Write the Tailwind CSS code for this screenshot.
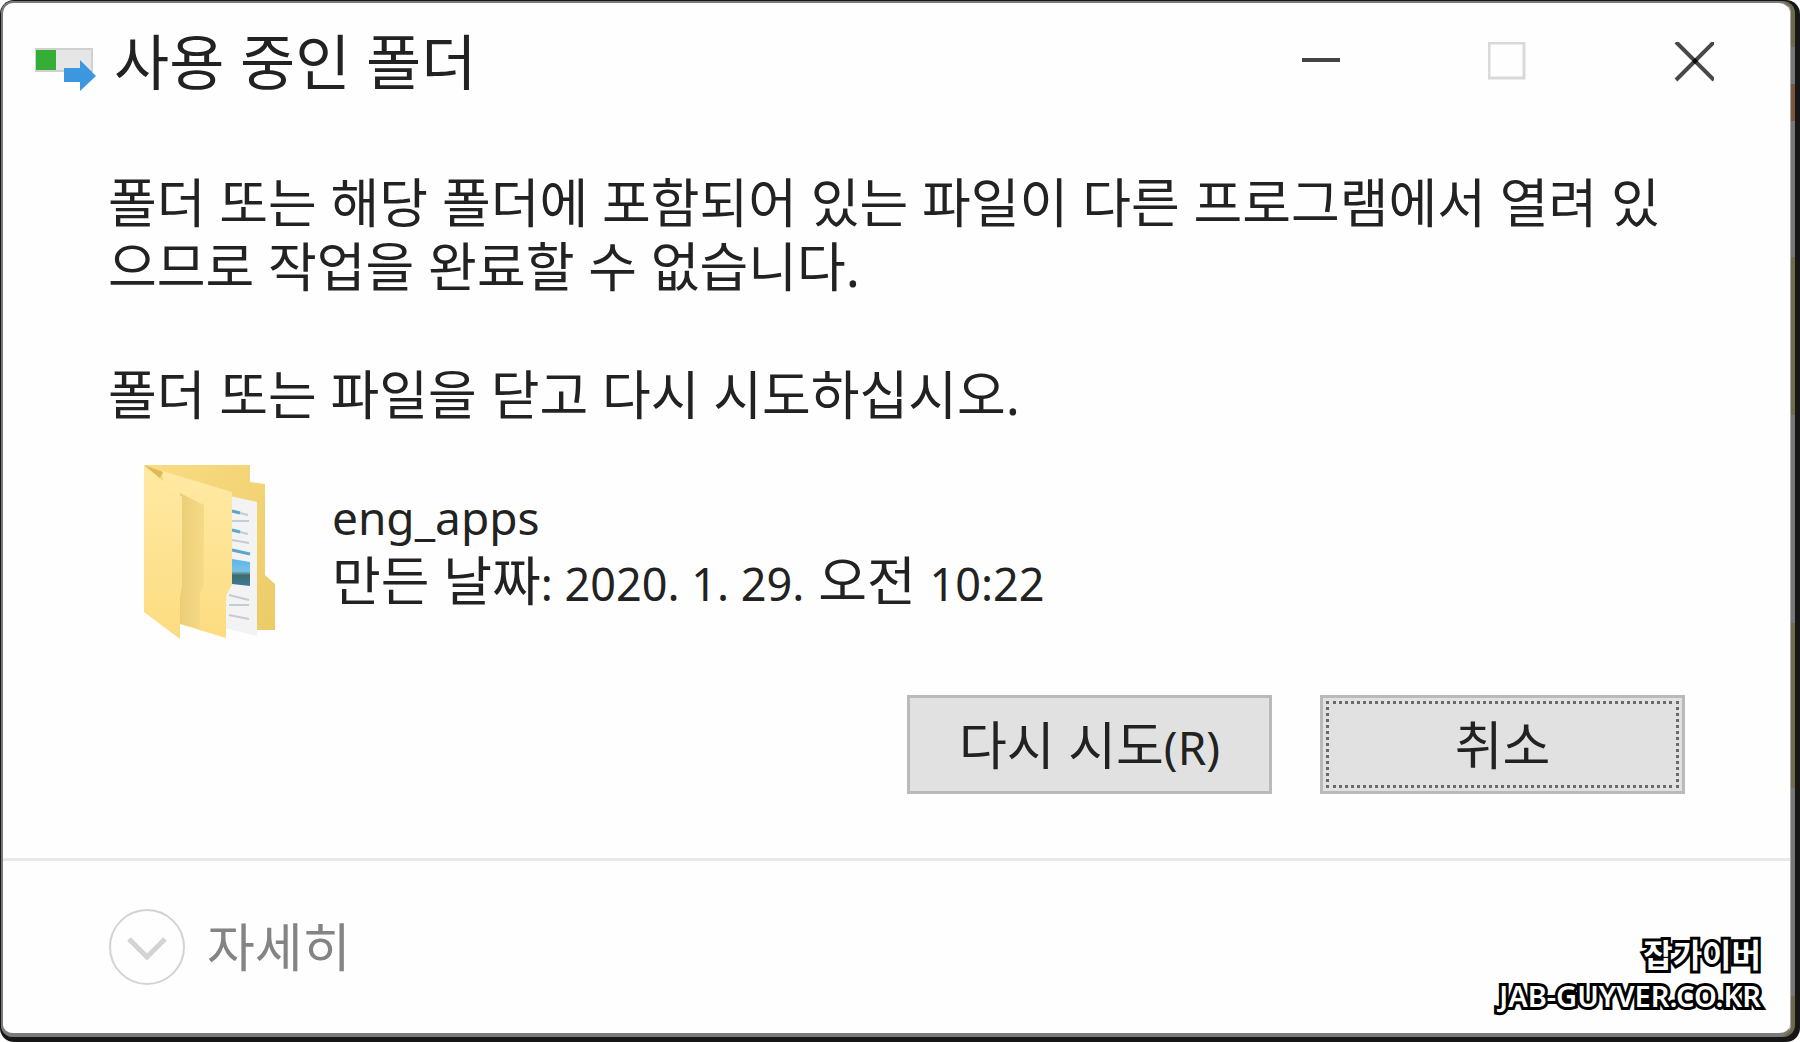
<!DOCTYPE html>
<html lang="ko">
<head>
<meta charset="utf-8">
<title>사용 중인 폴더</title>
<script src="https://cdn.jsdelivr.net/npm/@tailwindcss/browser@4"></script>
</head>
<body class="bg-white font-['Noto_Sans','Noto_Sans_CJK_KR',sans-serif] text-[#222]">
<div class="flex min-h-screen flex-col rounded-[14px] bg-[#161616] pt-px pr-[5px] pb-[5px] pl-px">
  <div class="flex grow flex-col rounded-xl bg-[linear-gradient(to_bottom,#6f694c_4.4%,#777_4.4%_8%,#79583f_8%_11.6%,#777_11.6%_24.7%,#736c4c_24.7%_40%,#777_40%_60%,#736c4c_60%_76%,#777_76%_96%,#6f694c_96%)] pr-1">
  <main class="relative flex grow flex-col rounded-xl border-t-2 border-r border-b-4 border-l-2 border-[#7a7a7a] border-r-[#aaa] bg-[#fefefe]">
    <header class="flex h-[117px] items-center pr-[56px] pl-[31px]">
      <svg class="mt-4 mr-4 h-[46px] w-[64px] shrink-0" viewBox="0 0 64 46" aria-hidden="true">
        <rect x="2" y="2" width="56" height="22" fill="#e6e6e6" stroke="#d0d0d0" stroke-width="2"/>
        <rect x="2" y="3" width="20" height="20" fill="#35ae35"/>
        <path d="M30 21h16v-8l16 16-16 15v-9H30z" fill="#3d97df"/>
      </svg>
      <h1 class="grow text-[60px] leading-[72px]">사용 중인 폴더</h1>
      <div class="flex items-center gap-[106px]">
        <button type="button" aria-label="최소화" class="flex size-20 items-center justify-center">
          <svg class="size-10" viewBox="0 0 40 40"><path d="M0 18h38" stroke="#444" stroke-width="4"/></svg>
        </button>
        <button type="button" aria-label="최대화" disabled class="flex size-20 items-center justify-center">
          <svg class="size-10" viewBox="0 0 40 40"><path d="M1 1h35v35H1z" fill="none" stroke="#d9d9d9" stroke-width="3"/></svg>
        </button>
        <button type="button" aria-label="닫기" class="flex size-20 items-center justify-center">
          <svg class="size-10" viewBox="0 0 40 40"><path d="M2 0l38 38M40 0L2 38" stroke="#484848" stroke-width="4"/><path d="M18 19l3-3 3 3-3 3z" fill="#000"/></svg>
        </button>
      </div>
    </header>
    <section class="grow border-b-3 border-[#e9e9e9] px-[105px] pt-[51px] pb-[64px]">
      <div class="text-[53px] leading-[64px]">
        <p>폴더 또는 해당 폴더에 포함되어 있는 파일이 다른 프로그램에서 열려 있<br>으므로 작업을 완료할 수 없습니다.</p>
        <p class="mt-[64px]">폴더 또는 파일을 닫고 다시 시도하십시오.</p>
      </div>
      <div class="mt-9 flex items-center">
        <svg class="ml-[34px] h-[180px] w-[146px] shrink-0" viewBox="0 0 146 180" aria-hidden="true">
          <defs>
            <linearGradient id="front" x1="0" y1="0" x2="0" y2="1"><stop offset="0" stop-color="#ffe9a3"/><stop offset="1" stop-color="#fcdc80"/></linearGradient>
            <linearGradient id="back" x1="0" y1="0" x2="1" y2="1"><stop offset="0" stop-color="#f9dc83"/><stop offset="1" stop-color="#eccb68"/></linearGradient>
            <linearGradient id="shade" x1="0" y1="0" x2="1" y2="0"><stop offset="0" stop-color="#eacd76"/><stop offset="1" stop-color="#f7da88"/></linearGradient>
            <linearGradient id="photo" x1="0" y1="0" x2="0" y2="1"><stop offset="0" stop-color="#5ab5ec"/><stop offset="0.45" stop-color="#7cc0e4"/><stop offset="0.6" stop-color="#3f6a68"/><stop offset="1" stop-color="#3b7ba2"/></linearGradient>
          </defs>
          <path d="M2 2h106v17l15 2v91l10 9v46h-27L40 120z" fill="url(#back)"/>
          <path d="M88 33l27 6v134l-32-8z" fill="#f3f3f3"/>
          <path d="M90 48l16 4M90 58h17M90 67l16 4M90 77l17 3M87 132l20 5M87 142h20M87 152l20 4" stroke="#c4cbd2" stroke-width="2"/>
          <path d="M90 48l8 2M90 67l8 2M90 87l18 4" stroke="#5fa6cf" stroke-width="3"/>
          <path d="M90 96l18 3v24l-18-2z" fill="url(#photo)"/>
          <path d="M20 8l70 21v93l-6 10v43l-43-13z" fill="url(#front)"/>
          <path d="M38 30l24 12v79l-4 10v35l-20-5z" fill="url(#shade)"/>
          <path d="M2 2l14 12 24 20v90l-2 10v42L2 149z" fill="url(#front)"/>
          <path d="M2 2l19 7-3 6z" fill="#dcba58"/>
        </svg>
        <div class="ml-11 pb-2 text-[53px] leading-[63px]">
          <p><span class="text-[46px]">eng_apps</span></p>
          <p>만든 날짜<span class="text-[45px]">: 2020. 1. 29.</span> 오전 <span class="text-[45px]">10:22</span></p>
        </div>
      </div>
      <div class="mt-[52px] flex justify-end gap-12">
        <button type="button" class="h-[99px] w-[365px] border-3 border-[#bababa] bg-[#e1e1e1] text-[52px] leading-none">다시 시도<span class="text-[46px]">(R)</span></button>
        <button type="button" class="h-[99px] w-[365px] border-3 border-[#bababa] bg-[#e1e1e1] p-[3px] text-[52px] leading-none"><span class="flex h-full items-center justify-center border-3 border-dotted border-[#6a6a6a]">취소</span></button>
      </div>
    </section>
    <footer class="flex h-[172px] items-center px-[106px]">
      <button type="button" class="flex items-center gap-5 text-[52px] leading-[64px] text-[#848484]">
        <svg class="size-[78px]" viewBox="0 0 78 78" fill="none" aria-hidden="true"><circle cx="38" cy="39" r="37" stroke="#d3d3d3" stroke-width="2"/><path d="M20 31l18 18 18-18" stroke="#d3d3d3" stroke-width="5"/></svg>
        자세히
      </button>
    </footer>
    <p class="absolute right-[29px] bottom-[17px] text-right text-[29px] leading-[40px] font-semibold text-white [paint-order:stroke_fill] [-webkit-text-stroke:6px_black]"><span class="text-[32px]">잡가이버</span><br>JAB-GUYVER.CO.KR</p>
  </main>
  </div>
</div>
</body>
</html>
